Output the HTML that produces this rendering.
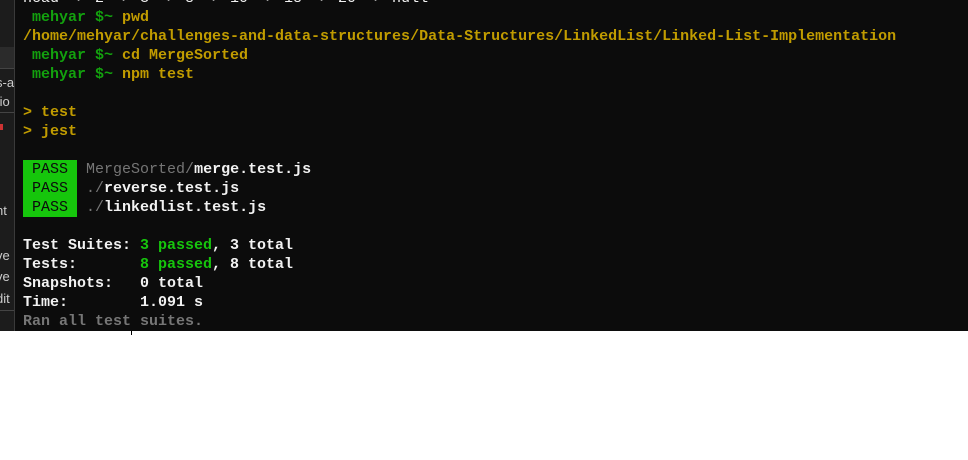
<!DOCTYPE html>
<html><head><style>
body{margin:0;width:968px;height:460px;background:#fff;overflow:hidden;position:relative;font-family:"Liberation Mono",monospace}
#term{position:absolute;left:0;top:0;width:968px;height:331px;background:#0c0c0c;overflow:hidden}
#side{position:absolute;left:0;top:0;width:14px;height:331px;background:#1c1c1c;border-right:1px solid #3a3a3a;overflow:hidden;font-family:"Liberation Sans",sans-serif;font-size:13px;color:#ccc}
#side div{position:absolute;left:-4px;white-space:nowrap}
pre{position:absolute;left:23px;top:-11.5px;margin:0;font-family:"Liberation Mono",monospace;font-size:15px;line-height:19px;font-weight:bold;color:#f2f2f2}
.y{color:#c19c00}.g{color:#13a10e}.gg{color:#16c60c}.d{color:#767676}
.p{background:#16c60c;color:#0c0c0c;font-weight:normal;display:inline-block;height:19px;line-height:19px;vertical-align:top}
.n{font-weight:normal}
</style></head><body>
<div id="term">
<div id="side">
<div style="top:47px;left:0;width:14px;height:21px;background:#2b2b2b"></div>
<div style="top:68px;left:0;width:14px;height:1px;background:#444"></div>
<div style="top:75px">s-a</div>
<div style="top:94px">tio</div>
<div style="top:112px;left:0;width:14px;height:1px;background:#444"></div>
<div style="top:124px;left:0;width:3px;height:6px;background:#c33"></div>
<div style="top:203px">nt</div>
<div style="top:248px">ve</div>
<div style="top:269px">ve</div>
<div style="top:291px">dit</div>
<div style="top:310px;left:0;width:14px;height:1px;background:#444"></div>
</div>
<pre><span class="n">head -> 2 -> 3 -> 8 -> 10 -> 18 -> 20 -> null</span>
<span class="g"> mehyar $~ </span><span class="y">pwd</span>
<span class="y">/home/mehyar/challenges-and-data-structures/Data-Structures/LinkedList/Linked-List-Implementation</span>
<span class="g"> mehyar $~ </span><span class="y">cd MergeSorted</span>
<span class="g"> mehyar $~ </span><span class="y">npm test</span>

<span class="y">&gt; test</span>
<span class="y">&gt; jest</span>

<span class="p"> PASS </span> <span class="d n">MergeSorted/</span>merge.test.js
<span class="p"> PASS </span> <span class="d n">./</span>reverse.test.js
<span class="p"> PASS </span> <span class="d n">./</span>linkedlist.test.js

Test Suites: <span class="gg">3 passed</span>, 3 total
Tests:       <span class="gg">8 passed</span>, 8 total
Snapshots:   0 total
Time:        1.091 s
<span class="d">Ran all test suites.</span></pre>
</div>
<div style="position:absolute;left:131px;top:331px;width:1px;height:4px;background:#000"></div>
</body></html>
